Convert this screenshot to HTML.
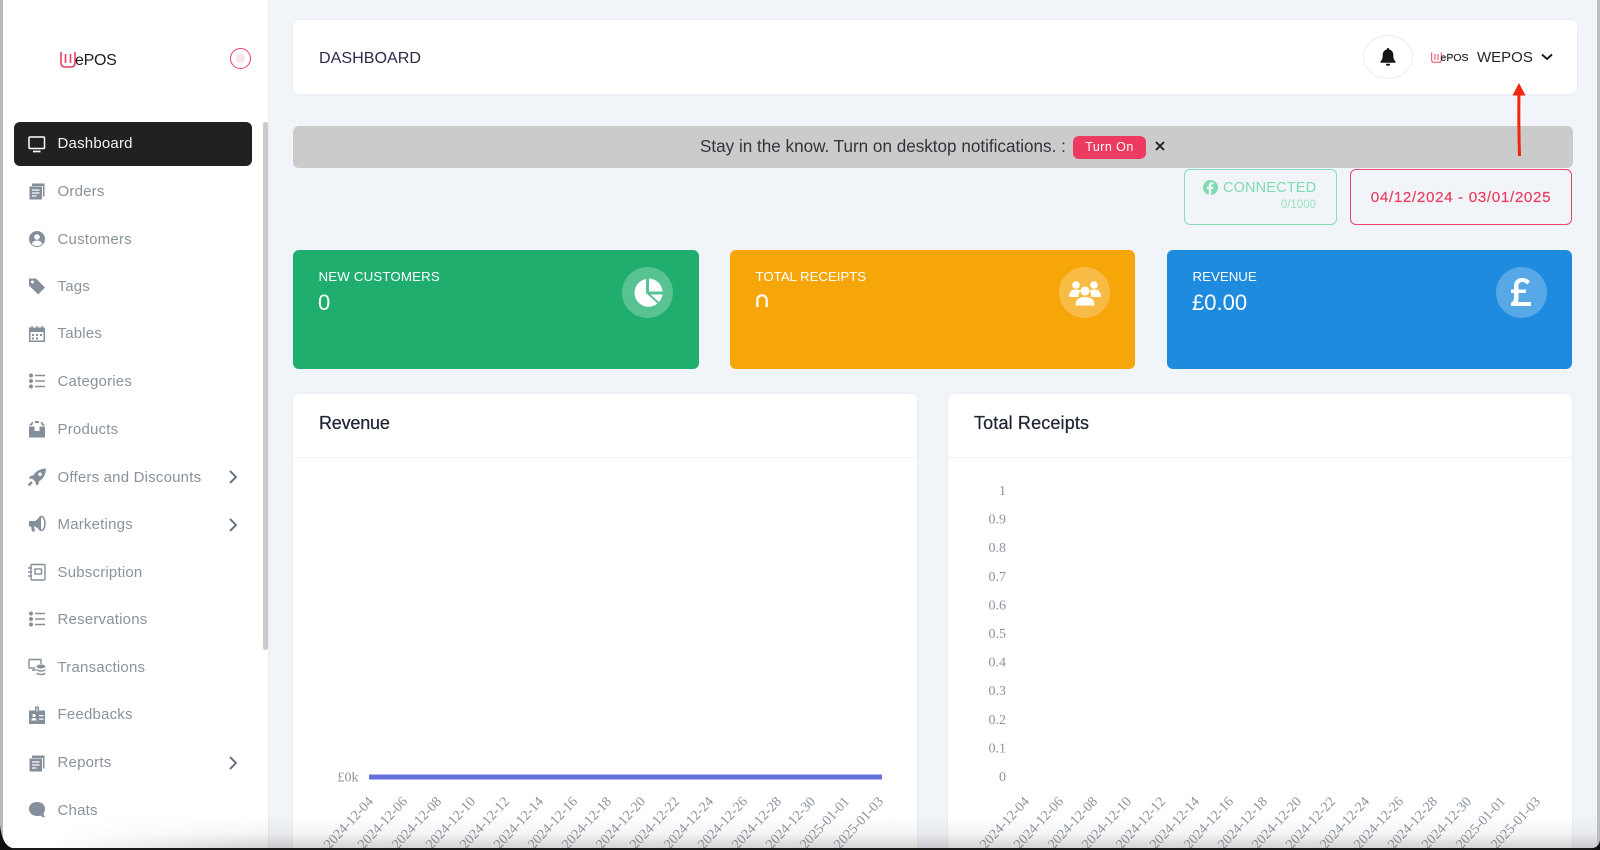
<!DOCTYPE html>
<html><head><meta charset="utf-8"><title>Dashboard</title>
<style>
*{box-sizing:border-box}
html{margin:0;padding:0;width:1600px;height:850px;overflow:hidden;background:#f1f4f9}
body{margin:0;padding:0;position:relative;width:1600px;height:850px;overflow:hidden;background:#f1f4f9;font-family:"Liberation Sans",sans-serif}
.a{position:absolute}
#side{left:3px;top:0;width:265px;height:850px;background:#fff}
.it{position:absolute;left:57.500px;font-size:15px;letter-spacing:.2px;color:#8a929c;line-height:20px;white-space:nowrap}
.ic{position:absolute;left:28px;width:18px;height:18px;fill:#858f9c}
.ch{position:absolute;left:227px;width:12px;height:14px;fill:none;stroke:#6e7885;stroke-width:2}
.card{background:#fff;border-radius:6px;box-shadow:0 0 2px rgba(40,50,70,.08)}
.stat{top:250px;height:119px;border-radius:6px;color:#fff}
.stat .l{position:absolute;left:25.500px;top:18px;font-size:13.300px;line-height:17px;white-space:nowrap}
.stat .v{position:absolute;left:25px;top:39px;font-size:22px;line-height:28px}
.stat .c{position:absolute;top:17px;width:51px;height:51px;border-radius:50%;background:rgba(255,255,255,.25)}
.tt{font-size:18px;font-weight:400;color:#1f2433;-webkit-text-stroke:.25px #1f2433;line-height:22px}
svg text{font-family:"Liberation Serif",serif;fill:#8b939e}
</style></head><body>

<div class="a" style="left:0;top:0;width:3px;height:850px;background:#b9b9b9"></div>
<div class="a" id="side"></div>
<div class="a" style="left:263px;top:122px;width:5px;height:528px;background:#c9cbcb;border-radius:3px"></div>
<div class="a" style="left:268px;top:0;width:1px;height:850px;background:#e8ecf2"></div>

<!-- logo -->
<svg class="a" style="left:60px;top:51px" width="16" height="17" viewBox="0 0 16 17" fill="none" stroke="#e8405f" stroke-width="1.6"><path d="M1 1v11q0 4 4 4h6q4 0 4-4V1"/><path d="M5.500 3v9M10.500 3v9"/></svg>
<div class="a" style="left:75px;top:50.500px;font-size:16px;line-height:20px;color:#1c1c22;letter-spacing:-.3px">ePOS</div>
<div class="a" style="left:230px;top:48px;width:21px;height:21px;border-radius:50%;border:1.200px solid #e8405f"></div>
<div class="a" style="left:236px;top:54px;width:9px;height:9px;border-radius:50%;background:#fbe3e8"></div>

<!-- nav -->
<div class="a" style="left:14px;top:122px;width:238px;height:44px;background:#212121;border-radius:6px"></div>
<svg class="ic" style="top:135px;fill:none;stroke:#fff;stroke-width:1.500" viewBox="0 0 18 18"><rect x="1" y="2" width="15.500" height="11.500" rx="1"/><path d="M5 16.500h7.500" stroke-width="1.700"/></svg>
<div class="it" style="top:134px;color:#f1f1f1">Dashboard</div>

<svg class="ic" style="top:182px" viewBox="0 0 18 18"><path d="M1.500 4.500h12.500v13H1.500zM4 4V1.500h12.500v13h-1.500V4z"/><path d="M4 8h7.500M4 11h7.500M4 14h4.500" stroke="#fff" stroke-width="1.300"/></svg>
<div class="it" style="top:182px">Orders</div>

<svg class="ic" style="top:230px" viewBox="0 0 18 18"><circle cx="9" cy="9" r="8"/><circle cx="9" cy="7" r="2.800" fill="#fff"/><path d="M3.800 14q1-3.500 5.200-3.500t5.200 3.500q-2 2-5.200 2t-5.200-2z" fill="#fff"/></svg>
<div class="it" style="top:230px">Customers</div>

<svg class="ic" style="top:277px" viewBox="0 0 18 18"><path d="M1 1.500h7l9 9-6.800 7L1 8.500zM4.500 3.500a1.500 1.500 0 1 0 .01 0z" fill-rule="evenodd"/></svg>
<div class="it" style="top:277px">Tags</div>

<svg class="ic" style="top:325px" viewBox="0 0 18 18"><path d="M1 2.500h16V17H1z"/><path d="M2.500 7h13v8.500h-13z" fill="#fff"/><path d="M4 1v3M9 1v3M14 1v3" stroke="#858f9c" stroke-width="1.400"/><path d="M4 9h2v2H4zM8 9h2v2H8zM12 9h2v2h-2zM4 12.500h2v2H4zM8 12.500h2v2H8z"/></svg>
<div class="it" style="top:324px">Tables</div>

<svg class="ic" style="top:372px" viewBox="0 0 18 18"><circle cx="3" cy="3.500" r="2"/><circle cx="3" cy="9" r="2"/><circle cx="3" cy="14.500" r="2"/><path d="M7 3.500h10M7 9h10M7 14.500h10" stroke="#858f9c" stroke-width="1.400"/></svg>
<div class="it" style="top:372px">Categories</div>

<svg class="ic" style="top:420px" viewBox="0 0 18 18"><path d="M1 5.500l3-3.500h1.500L4 5.500zM17 5.500l-3-3.500h-1.500L14 5.500zM7 1h4v2H7z"/><path d="M1 6.500h5.500V11h5V6.500H17V17.500H1z"/></svg>
<div class="it" style="top:420px">Products</div>

<svg class="ic" style="top:468px" viewBox="0 0 18 18"><path d="M17.500 .5q-6 .5-9.500 3.500L5 7.500 2 8l-1 2.500 3.500.5 3 3 .5 3.500 2.500-1 .5-3 3.500-3q3-3.500 3.500-9zM12 4.500a1.700 1.700 0 1 1 0 3.400 1.700 1.700 0 0 1 0-3.400z" fill-rule="evenodd"/><path d="M.5 17.500l3.500-3.500" stroke="#858f9c" stroke-width="2.500"/></svg>
<div class="it" style="top:467.500px">Offers and Discounts</div>
<svg class="ch" style="top:470px" viewBox="0 0 12 14"><path d="M3 1l6 6-6 6"/></svg>

<svg class="ic" style="top:515px" viewBox="0 0 18 18"><path d="M1 6h6l6-4.500v14L7 11.500H6l1 5H4L3 11.500H1z"/><ellipse cx="13.500" cy="8.500" rx="3.500" ry="7" fill="none" stroke="#858f9c" stroke-width="1.500"/></svg>
<div class="it" style="top:515px">Marketings</div>
<svg class="ch" style="top:518px" viewBox="0 0 12 14"><path d="M3 1l6 6-6 6"/></svg>

<svg class="ic" style="top:563px;fill:none;stroke:#858f9c;stroke-width:1.400" viewBox="0 0 18 18"><rect x="3" y="1.500" width="14" height="15.500" rx="1"/><rect x="7" y="6" width="6.500" height="5"/><path d="M0 5h4M0 9h4M0 13h4"/></svg>
<div class="it" style="top:562.500px">Subscription</div>

<svg class="ic" style="top:610px" viewBox="0 0 18 18"><circle cx="3" cy="3.500" r="2"/><circle cx="3" cy="9" r="2"/><circle cx="3" cy="14.500" r="2"/><path d="M7 3.500h10M7 9h10M7 14.500h10" stroke="#858f9c" stroke-width="1.400"/></svg>
<div class="it" style="top:610px">Reservations</div>

<svg class="ic" style="top:658px" viewBox="0 0 18 18"><path d="M1 1.500h12V6M1 1.500V10h6M4 12h4" fill="none" stroke="#858f9c" stroke-width="1.400"/><ellipse cx="13" cy="8.500" rx="4.500" ry="2"/><path d="M8.500 11q4.500 2.500 9 0v1.500q-4.500 2.500-9 0zM8.500 14.500q4.500 2.500 9 0V16q-4.500 2.500-9 0z"/></svg>
<div class="it" style="top:657.500px">Transactions</div>

<svg class="ic" style="top:706px" viewBox="0 0 18 18"><path d="M1 4.500h6V.5h4v4h6V18H1z"/><path d="M8.500 1.500h1v4h-1z" fill="#fff"/><circle cx="6" cy="9.500" r="1.600" fill="#fff"/><path d="M3.300 14.500q.3-2.500 2.700-2.500t2.700 2.500zM11 9h4.500v1.300H11zM11 12.500h4.500v1.300H11z" fill="#fff"/></svg>
<div class="it" style="top:705px">Feedbacks</div>

<svg class="ic" style="top:754px" viewBox="0 0 18 18"><path d="M1.500 4.500h12.500v13H1.500zM4 4V1.500h12.500v13h-1.500V4z"/><path d="M4 8h7.500M4 11h7.500M4 14h4.500" stroke="#fff" stroke-width="1.300"/></svg>
<div class="it" style="top:753px">Reports</div>
<svg class="ch" style="top:756px" viewBox="0 0 12 14"><path d="M3 1l6 6-6 6"/></svg>

<svg class="ic" style="top:801px" viewBox="0 0 18 18"><path d="M9 1c4.700 0 8 2.800 8 6.700 0 2-.8 3.600-1.500 4.800.2 1.500.8 3 1.500 4-2-.2-3.500-1-4.600-1.900-1 .3-2 .4-3.400.4-4.700 0-8-3-8-7.200S4.300 1 9 1z"/></svg>
<div class="it" style="top:800.500px">Chats</div>

<!-- header -->
<div class="a card" style="left:293px;top:20px;width:1284px;height:74px"></div>
<div class="a" style="left:319px;top:47.500px;font-size:16.100px;line-height:20px;color:#2c2c48">DASHBOARD</div>
<div class="a" style="left:1363px;top:35px;width:50px;height:44px;border-radius:50%;border:1px solid #eeeeee"></div>
<svg class="a" style="left:1380px;top:48px" width="16" height="18" viewBox="0 0 16 18" fill="#17171a"><path d="M8 0a1.300 1.300 0 0 1 1.300 1.500C12 2.200 13.300 4.300 13.300 7c0 3.500.8 5 2.200 6.500.4.500.1 1.200-.6 1.200H1.100c-.7 0-1-.7-.6-1.200C1.900 12 2.700 10.500 2.700 7c0-2.700 1.300-4.800 4-5.500A1.300 1.300 0 0 1 8 0zM5.800 15.700h4.400A2.200 2.200 0 0 1 8 17.800a2.200 2.200 0 0 1-2.200-2.100z"/></svg>
<svg class="a" style="left:1431px;top:52px" width="11" height="11" viewBox="0 0 11 11" fill="none" stroke="#e8405f" stroke-width="1"><path d="M.7.500v7.500q0 2.300 2.300 2.300h5q2.300 0 2.300-2.300V.5"/><path d="M4 2v6M7 2v6"/></svg>
<div class="a" style="left:1440.500px;top:50px;font-size:10.500px;line-height:16px;color:#1c1c22;-webkit-text-stroke:.15px #1c1c22">ePOS</div>
<div class="a" style="left:1477px;top:47.500px;font-size:15px;line-height:20px;color:#25252b">WEPOS</div>
<svg class="a" style="left:1541px;top:53px" width="12" height="8" viewBox="0 0 12 8" fill="none" stroke="#17171a" stroke-width="1.900"><path d="M1 1.500l5 4.500 5-4.500"/></svg>

<!-- banner -->
<div class="a" style="left:293px;top:126px;width:1280px;height:42px;background:#cbcbcb;border-radius:6px"></div>
<div class="a" style="left:700px;top:136.500px;font-size:17.100px;line-height:20px;color:#33333b;white-space:nowrap">Stay in the know. Turn on desktop notifications. :</div>
<div class="a" style="left:1073px;top:136px;width:73px;height:23px;background:#ec3a60;border-radius:6px;color:#fff;font-size:12.500px;line-height:23px;text-align:center;letter-spacing:.45px">Turn On</div>
<svg class="a" style="left:1155px;top:141px" width="10" height="10" viewBox="0 0 10 10" stroke="#1d1d22" stroke-width="1.900"><path d="M1 1l8 8M9 1L1 9"/></svg>

<!-- connected + date -->
<div class="a" style="left:1184px;top:169px;width:153px;height:56px;border:1px solid #86dcb4;border-radius:6px;background:#f1f4f9"></div>
<svg class="a" style="left:1203px;top:180px" width="15" height="15" viewBox="0 0 15 15"><circle cx="7.500" cy="7.500" r="7.500" fill="#7ddbb0"/><path d="M8.200 15V9h2l.3-2.200H8.200V5.500c0-.7.300-1.100 1.100-1.100h1.200V2.500C10 2.400 9.400 2.300 8.800 2.300c-1.800 0-3 1.100-3 3v1.500H3.900V9h1.900v6z" fill="#f1f4f9"/></svg>
<div class="a" style="left:1223px;top:180px;font-size:14.500px;line-height:17px;color:#7ddbb0;letter-spacing:.15px">CONNECTED</div>
<div class="a" style="left:1265px;top:198px;width:51px;text-align:right;font-size:11.500px;line-height:14px;color:#9ce3c3">0/1000</div>
<div class="a" style="left:1350px;top:169px;width:222px;height:56px;border:1px solid #e8466a;border-radius:6px;color:#ea3f63;font-size:15.200px;line-height:55px;text-align:center;letter-spacing:.65px;-webkit-text-stroke:.2px #ea3f63">04/12/2024 - 03/01/2025</div>

<!-- stats -->
<div class="a stat" style="left:293px;width:406px;background:#20ae6e">
  <div class="l" style="letter-spacing:.15px">NEW CUSTOMERS</div><div class="v">0</div>
  <div class="c" style="left:329px"></div>
  <svg class="a" style="left:339px;top:27px" width="32" height="32" viewBox="0 0 32 32" fill="#fff"><path d="M14 2A14 14 0 1 0 25.500 26.500L14 16z"/><path d="M17 1.500A14 14 0 0 1 30.500 14.500H17z"/><path d="M18.500 17.500H30.500A14 14 0 0 1 27 25z"/></svg>
</div>
<div class="a stat" style="left:730px;width:405px;background:#f6a608">
  <div class="l" style="letter-spacing:-.05px">TOTAL RECEIPTS</div>
  <svg class="a" style="left:26px;top:44px" width="12" height="14" viewBox="0 0 12 14" fill="none" stroke="#fff" stroke-width="2.200"><path d="M1.300 13V6a4.700 4.700 0 0 1 9.400 0v7"/></svg>
  <div class="c" style="left:329px"></div>
  <svg class="a" style="left:338px;top:30px" width="34" height="26" viewBox="0 0 34 26" fill="#fff"><circle cx="8" cy="5" r="3.800"/><circle cx="26" cy="5" r="3.800"/><path d="M1 17q0-7.500 7-7.500 3 0 4.500 1.500-2 2-2 6zM33 17q0-7.500-7-7.500-3 0-4.500 1.500 2 2 2 6z"/><circle cx="17" cy="11" r="4.500"/><path d="M7.500 25.500q0-8.500 9.500-8.500t9.500 8.500z"/></svg>
</div>
<div class="a stat" style="left:1167px;width:405px;background:#1e8bdf">
  <div class="l">REVENUE</div><div class="v">£0.00</div>
  <div class="c" style="left:329px"></div>
  <svg class="a" style="left:343px;top:27px" width="22" height="30" viewBox="0 0 22 30" fill="#fff"><path d="M12 1c4 0 6.500 1.500 8 3.500l-3 3C15.800 6 14.500 5 12.500 5 10 5 8.500 6.500 8.500 9v3.500H16V16H8.500v6.500c0 1-.3 2-.7 2.500H21v4H1v-3.500c1.700-.8 3-2.300 3-4.800V16H1v-3.500h3V9c0-5 3.500-8 8-8z"/></svg>
</div>

<!-- chart cards -->
<div class="a card" style="left:293px;top:394px;width:624px;height:470px"></div>
<div class="a card" style="left:948px;top:394px;width:624px;height:470px"></div>
<div class="a" style="left:293px;top:457px;width:624px;height:1px;background:#eef0f3"></div>
<div class="a" style="left:948px;top:457px;width:624px;height:1px;background:#eef0f3"></div>
<div class="a tt" style="left:319px;top:412px;letter-spacing:-.2px">Revenue</div>
<div class="a tt" style="left:974px;top:412px;letter-spacing:.15px">Total Receipts</div>

<svg class="a" style="left:0;top:0" width="1600" height="850" font-size="14">
<rect x="369" y="774.500" width="513" height="5" fill="#6470dc"/>
<text x="358.500" y="781.500" text-anchor="end">£0k</text>
<g text-anchor="end">
<text x="1006" y="495">1</text><text x="1006" y="523.600">0.9</text><text x="1006" y="552.200">0.8</text><text x="1006" y="580.800">0.7</text><text x="1006" y="609.400">0.6</text><text x="1006" y="638">0.5</text><text x="1006" y="666.600">0.4</text><text x="1006" y="695.200">0.3</text><text x="1006" y="723.800">0.2</text><text x="1006" y="752.400">0.1</text><text x="1006" y="781">0</text>
</g>
<g text-anchor="end">
<text transform="translate(374,802) rotate(-47)">2024-12-04</text>
<text transform="translate(408,802) rotate(-47)">2024-12-06</text>
<text transform="translate(442,802) rotate(-47)">2024-12-08</text>
<text transform="translate(476,802) rotate(-47)">2024-12-10</text>
<text transform="translate(510,802) rotate(-47)">2024-12-12</text>
<text transform="translate(544,802) rotate(-47)">2024-12-14</text>
<text transform="translate(578,802) rotate(-47)">2024-12-16</text>
<text transform="translate(612,802) rotate(-47)">2024-12-18</text>
<text transform="translate(646,802) rotate(-47)">2024-12-20</text>
<text transform="translate(680,802) rotate(-47)">2024-12-22</text>
<text transform="translate(714,802) rotate(-47)">2024-12-24</text>
<text transform="translate(748,802) rotate(-47)">2024-12-26</text>
<text transform="translate(782,802) rotate(-47)">2024-12-28</text>
<text transform="translate(816,802) rotate(-47)">2024-12-30</text>
<text transform="translate(850,802) rotate(-47)">2025-01-01</text>
<text transform="translate(884,802) rotate(-47)">2025-01-03</text>
<text transform="translate(1030,802) rotate(-47)">2024-12-04</text>
<text transform="translate(1064,802) rotate(-47)">2024-12-06</text>
<text transform="translate(1098,802) rotate(-47)">2024-12-08</text>
<text transform="translate(1132,802) rotate(-47)">2024-12-10</text>
<text transform="translate(1166,802) rotate(-47)">2024-12-12</text>
<text transform="translate(1200,802) rotate(-47)">2024-12-14</text>
<text transform="translate(1234,802) rotate(-47)">2024-12-16</text>
<text transform="translate(1268,802) rotate(-47)">2024-12-18</text>
<text transform="translate(1302,802) rotate(-47)">2024-12-20</text>
<text transform="translate(1336,802) rotate(-47)">2024-12-22</text>
<text transform="translate(1370,802) rotate(-47)">2024-12-24</text>
<text transform="translate(1404,802) rotate(-47)">2024-12-26</text>
<text transform="translate(1438,802) rotate(-47)">2024-12-28</text>
<text transform="translate(1472,802) rotate(-47)">2024-12-30</text>
<text transform="translate(1506,802) rotate(-47)">2025-01-01</text>
<text transform="translate(1541,802) rotate(-47)">2025-01-03</text>
</g>
<!-- red annotation arrow -->
<path d="M1519.500 156Q1518.500 125 1519 92" stroke="#f2260f" stroke-width="3" fill="none"/>
<path d="M1519 83l6.500 12.500h-13z" fill="#f2260f"/>
</svg>

<!-- window edge effects -->
<div class="a" style="left:0;top:815px;width:1600px;height:33px;background:linear-gradient(to bottom,rgba(130,130,130,0),rgba(130,130,130,.08) 55%,rgba(110,110,110,.3));-webkit-mask-image:linear-gradient(to right,transparent 50px,#000 260px);mask-image:linear-gradient(to right,transparent 50px,#000 260px)"></div>
<div class="a" style="left:1597px;top:0;width:3px;height:850px;background:#bdbdbd"></div>
<div class="a" style="left:0;top:848px;width:1600px;height:2px;background:#1b1c1a"></div>
<svg class="a" style="left:0;top:825px" width="12" height="25" viewBox="0 0 12 25"><path d="M0 0Q2 20 12 23V25H0z" fill="#111"/></svg>
<svg class="a" style="left:1590px;top:840px" width="10" height="10" viewBox="0 0 10 10"><path d="M10 0Q9 7 2 8.500V10h8z" fill="#111"/></svg>
</body></html>
